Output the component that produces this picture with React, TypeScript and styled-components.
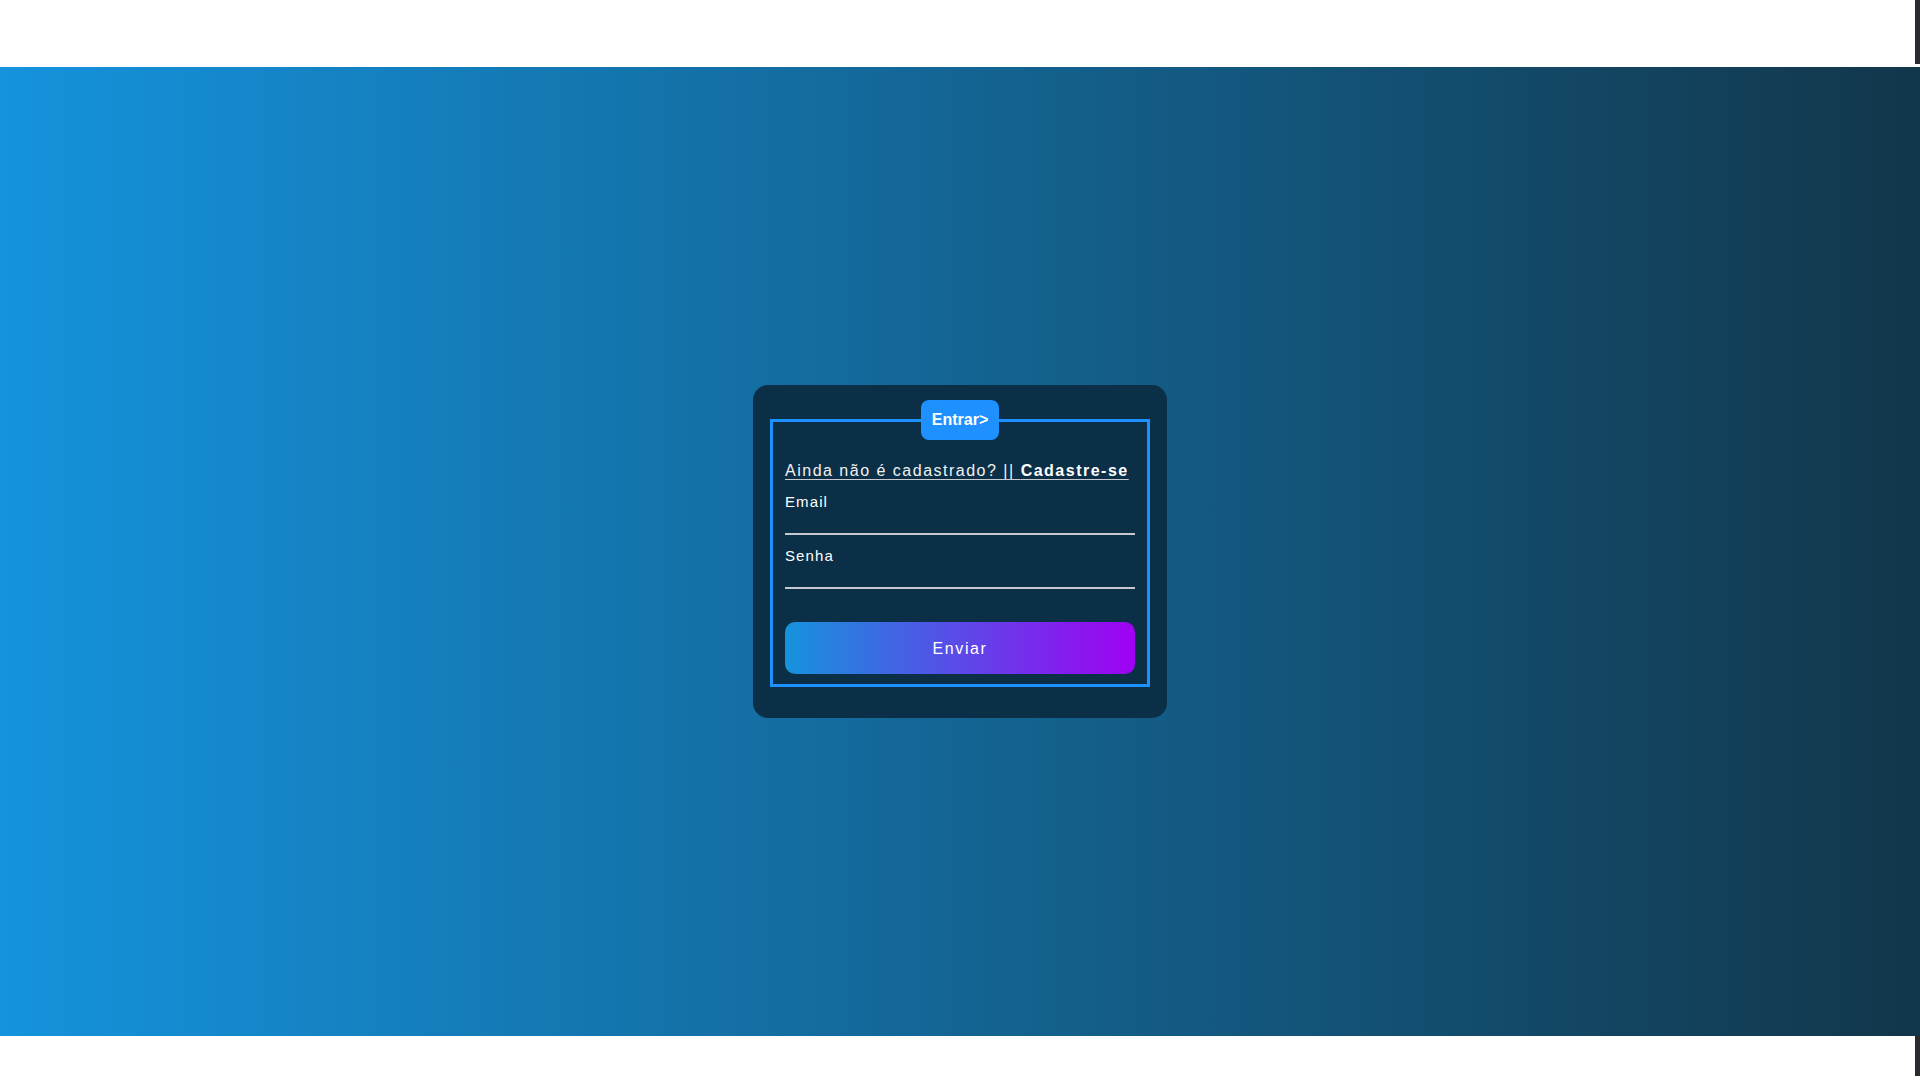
import React from "react";
import styled, { createGlobalStyle } from "styled-components";

const GlobalStyle = createGlobalStyle`
  html, body {
    margin: 0;
    padding: 0;
    background: #ffffff;
    font-family: "Liberation Sans", Arial, sans-serif;
  }
  * { box-sizing: border-box; }
`;

const Page = styled.div`
  display: flex;
  flex-direction: column;
  width: 100%;
  min-height: 1080px;
  background: #ffffff;
`;

const WhiteBar = styled.div<{ $h: number }>`
  height: ${(p) => p.$h}px;
  display: flex;
  justify-content: flex-end;
  align-items: flex-start;
`;

const EdgeStrip = styled.div<{ $h: number }>`
  width: 5px;
  height: ${(p) => p.$h}px;
  background: #2c2a31;
`;

const Hero = styled.main`
  height: 969px;
  display: flex;
  align-items: center;
  justify-content: center;
  background: linear-gradient(to right, #1593dd 0%, #12364a 100%);
`;

const Card = styled.div`
  width: 414px;
  padding: 15px 17px 31px;
  background: #0a2f47;
  border-radius: 15px;
`;

const Box = styled.fieldset`
  margin: 0;
  min-width: 0;
  border: 3px solid #1e90ff;
  padding: 21px 12px 10px;
  display: flex;
  flex-direction: column;
`;

const Legend = styled.legend`
  margin: 0 auto;
  padding: 11px;
  background: #1e90ff;
  border-radius: 8px;
  color: #ffffff;
  font-size: 16px;
  font-weight: 700;
  line-height: 18px;
`;

const SignupLine = styled.p`
  margin: 0;
  font-size: 16px;
  line-height: 19.5px;
  letter-spacing: 1.5px;
  color: #f2f2f2;
  white-space: nowrap;
`;

const SignupLink = styled.a`
  color: #f2f2f2;
  text-decoration: underline;
  text-decoration-color: #c9cdd2;
  text-decoration-skip-ink: none;
  text-underline-offset: 3px;
  cursor: pointer;
`;

const Strong = styled.b`
  font-weight: 700;
  color: #ffffff;
`;

const Field = styled.div`
  margin-top: 12px;
  display: flex;
  flex-direction: column;
`;

const Label = styled.label`
  display: block;
  font-size: 15px;
  line-height: 17px;
  letter-spacing: 1.1px;
  color: #ffffff;
`;

const Input = styled.input`
  display: block;
  width: 100%;
  height: 25px;
  margin: 0;
  padding: 0;
  border: none;
  border-bottom: 2px solid #c5c9ce;
  background: transparent;
  color: #ffffff;
  font-family: inherit;
  font-size: 15px;
  outline: none;
`;

const Submit = styled.button`
  margin-top: 33px;
  height: 52px;
  width: 100%;
  padding: 3px 0 0;
  border: none;
  border-radius: 10px;
  background: linear-gradient(to right, #1693dd 0%, #a000f2 100%);
  color: #ffffff;
  font-family: "Liberation Sans", Arial, sans-serif;
  font-size: 16px;
  letter-spacing: 1.6px;
  cursor: pointer;
`;

export default function App() {
  return (
    <>
      <GlobalStyle />
      <Page>
        <WhiteBar $h={67}>
          <EdgeStrip $h={64} />
        </WhiteBar>
        <Hero>
          <Card>
            <Box>
              <Legend>Entrar&gt;</Legend>
              <SignupLine>
                <SignupLink>
                  Ainda não é cadastrado? || <Strong>Cadastre-se</Strong>
                </SignupLink>
              </SignupLine>
              <Field>
                <Label htmlFor="email">Email</Label>
                <Input id="email" type="email" />
              </Field>
              <Field>
                <Label htmlFor="senha">Senha</Label>
                <Input id="senha" type="password" />
              </Field>
              <Submit type="button">Enviar</Submit>
            </Box>
          </Card>
        </Hero>
        <WhiteBar $h={44}>
          <EdgeStrip $h={40} />
        </WhiteBar>
      </Page>
    </>
  );
}
